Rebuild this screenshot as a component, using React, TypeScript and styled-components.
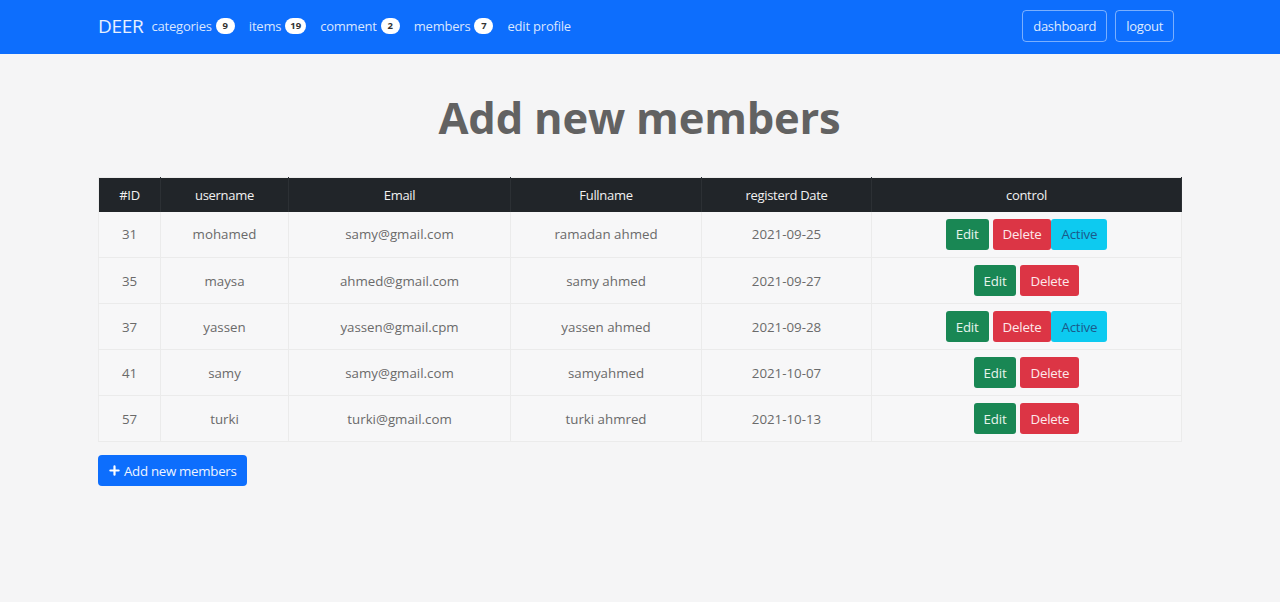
import styled, { createGlobalStyle } from 'styled-components'

const GlobalStyle = createGlobalStyle`
  * { box-sizing: border-box; }
  body {
    margin: 0;
    background: #f5f5f6;
    font-family: "Open Sans", "Noto Sans", sans-serif;
    color: #666;
  }
`

type Member = {
  id: number
  username: string
  email: string
  fullname: string
  date: string
  pending: boolean
}

const members: Member[] = [
  { id: 31, username: 'mohamed', email: 'samy@gmail.com', fullname: 'ramadan ahmed', date: '2021-09-25', pending: true },
  { id: 35, username: 'maysa', email: 'ahmed@gmail.com', fullname: 'samy ahmed', date: '2021-09-27', pending: false },
  { id: 37, username: 'yassen', email: 'yassen@gmail.cpm', fullname: 'yassen ahmed', date: '2021-09-28', pending: true },
  { id: 41, username: 'samy', email: 'samy@gmail.com', fullname: 'samyahmed', date: '2021-10-07', pending: false },
  { id: 57, username: 'turki', email: 'turki@gmail.com', fullname: 'turki ahmred', date: '2021-10-13', pending: false },
]

const navLinks = [
  { label: 'categories', count: 9 },
  { label: 'items', count: 19 },
  { label: 'comment', count: 2 },
  { label: 'members', count: 7 },
  { label: 'edit profile' },
]

const columns = [
  { label: '#ID', width: 62 },
  { label: 'username', width: 128 },
  { label: 'Email', width: 222 },
  { label: 'Fullname', width: 191 },
  { label: 'registerd Date', width: 170 },
  { label: 'control', width: 310 },
]

export default function App() {
  return (
    <>
      <GlobalStyle />
      <Navbar>
        <NavInner>
          <Brand>DEER</Brand>
          <NavList>
            {navLinks.map((l) => (
              <NavLink key={l.label}>
                {l.label}
                {l.count !== undefined && <Badge>{l.count}</Badge>}
              </NavLink>
            ))}
          </NavList>
          <NavActions>
            <OutlineButton>dashboard</OutlineButton>
            <OutlineButton>logout</OutlineButton>
          </NavActions>
        </NavInner>
      </Navbar>

      <Main>
        <Title>Add new members</Title>
        <Table>
          <colgroup>
            {columns.map((c) => (
              <col key={c.label} style={{ width: c.width }} />
            ))}
          </colgroup>
          <thead>
            <tr>
              {columns.map((c) => (
                <Th key={c.label}>{c.label}</Th>
              ))}
            </tr>
          </thead>
          <tbody>
            {members.map((m) => (
              <tr key={m.id}>
                <Td>{m.id}</Td>
                <Td>{m.username}</Td>
                <Td>{m.email}</Td>
                <Td>{m.fullname}</Td>
                <Td>{m.date}</Td>
                <Td>
                  <Controls>
                    <Btn $variant="success">Edit</Btn>
                    <Btn $variant="danger">Delete</Btn>
                    {m.pending && <Btn $variant="info">Active</Btn>}
                  </Controls>
                </Td>
              </tr>
            ))}
          </tbody>
        </Table>
        <AddButton>
          <PlusIcon viewBox="0 0 12 12">
            <path d="M6 1.5v9M1.5 6h9" stroke="#fff" strokeWidth="2.4" strokeLinecap="round" />
          </PlusIcon>
          Add new members
        </AddButton>
      </Main>
    </>
  )
}

const Navbar = styled.nav`
  height: 54px;
  padding-bottom: 3px;
  background: #0d6efd;
  display: flex;
  align-items: center;
`

const NavInner = styled.div`
  width: 1083px;
  margin-left: 98px;
  display: flex;
  align-items: center;
`

const Brand = styled.span`
  font-size: 19px;
  color: #e8f0ff;
  margin-right: 8px;
  letter-spacing: -0.3px;
`

const NavList = styled.div`
  display: flex;
  align-items: center;
  gap: 14px;
  flex: 1;
`

const NavLink = styled.span`
  display: flex;
  align-items: center;
  gap: 4px;
  font-size: 13px;
  letter-spacing: -0.2px;
  color: rgba(255, 255, 255, 0.85);
`

const Badge = styled.span`
  display: inline-flex;
  align-items: center;
  justify-content: center;
  min-width: 19px;
  height: 16px;
  padding: 0 5px;
  border-radius: 8px;
  background: #fff;
  color: #333;
  font-size: 9.5px;
  font-weight: 700;
  letter-spacing: 0;
`

const NavActions = styled.div`
  display: flex;
  gap: 8px;
  margin-right: 7px;
`

const OutlineButton = styled.button`
  height: 32px;
  padding: 0 10px;
  background: transparent;
  border: 1px solid rgba(255, 255, 255, 0.45);
  border-radius: 4px;
  color: rgba(255, 255, 255, 0.88);
  font-family: inherit;
  font-size: 13px;
  letter-spacing: -0.3px;
`

const Main = styled.main`
  width: 1083px;
  margin-left: 98px;
  padding-top: 36px;
`

const Title = styled.h1`
  margin: 0 0 31px;
  text-align: center;
  font-size: 43.5px;
  font-weight: 700;
  line-height: 56px;
  color: #626262;
  letter-spacing: -0.2px;
`

const Table = styled.table`
  width: 1083px;
  table-layout: fixed;
  border-collapse: collapse;
  background: #f7f7f8;
  border: 1px solid #ececec;
`

const Th = styled.th`
  height: 34px;
  background: #212529;
  color: #f1f1f1;
  font-size: 13px;
  font-weight: 400;
  letter-spacing: -0.3px;
  border-right: 1px solid #2c3034;
  text-align: center;
  padding: 0;
`

const Td = styled.td`
  height: 46px;
  text-align: center;
  font-size: 13.3px;
  color: #6a6a6a;
  border-right: 1px solid #ebebeb;
  border-bottom: 1px solid #ebebeb;
  padding: 0;
`

const Controls = styled.div`
  display: flex;
  justify-content: center;
`

const variants = {
  success: { bg: '#198754', color: '#e7f3ec', gapBefore: 0 },
  danger: { bg: '#dc3545', color: '#fde8ea', gapBefore: 4 },
  info: { bg: '#0dcaf0', color: '#1b5a8a', gapBefore: 0 },
}

const Btn = styled.button<{ $variant: keyof typeof variants }>`
  height: 31px;
  padding: 0 10px;
  margin-left: ${(p) => variants[p.$variant].gapBefore}px;
  border: none;
  border-radius: 3px;
  background: ${(p) => variants[p.$variant].bg};
  color: ${(p) => variants[p.$variant].color};
  font-family: inherit;
  font-size: 13.3px;
  letter-spacing: -0.2px;
`

const AddButton = styled.button`
  margin-top: 13px;
  height: 31px;
  padding: 0 11px;
  display: inline-flex;
  align-items: center;
  gap: 4px;
  background: #0d6efd;
  border: none;
  border-radius: 4px;
  color: #eef4ff;
  font-family: inherit;
  font-size: 13.3px;
  letter-spacing: -0.3px;
`

const PlusIcon = styled.svg`
  width: 11px;
  height: 11px;
`
